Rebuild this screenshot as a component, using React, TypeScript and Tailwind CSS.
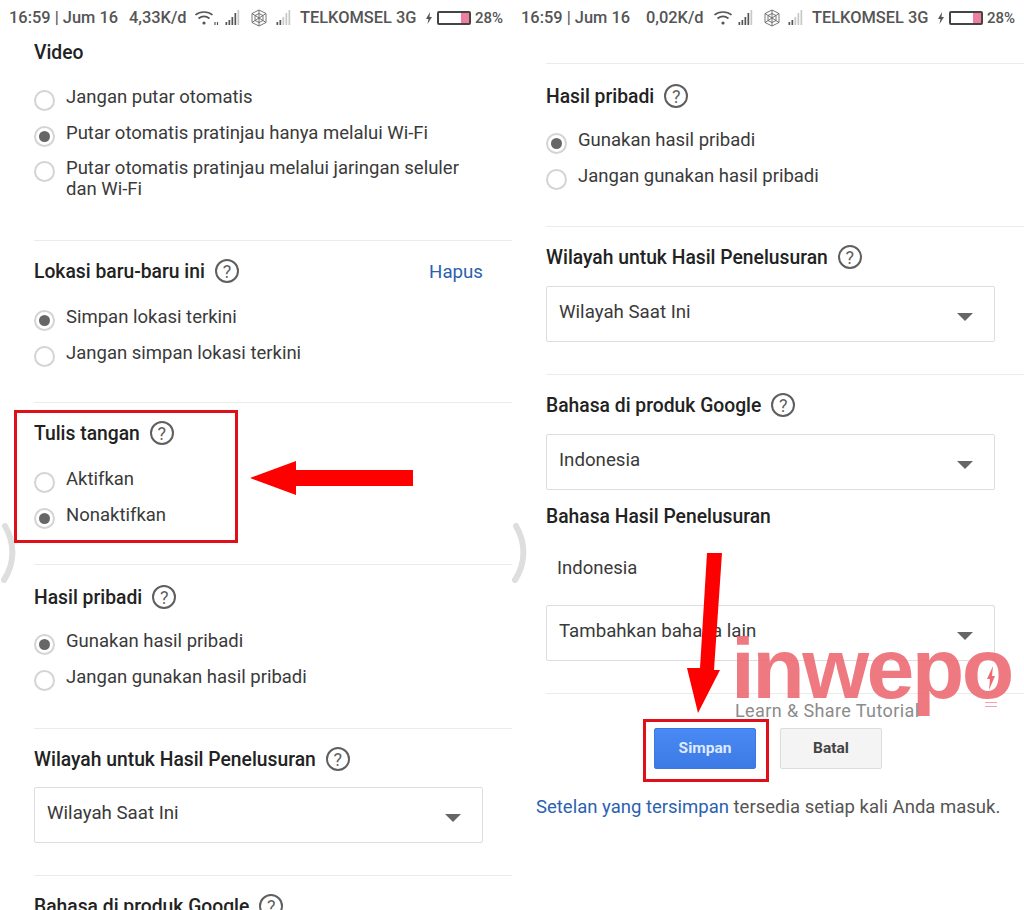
import React from "react";

const font = { fontFamily: "Roboto, 'Liberation Sans', sans-serif" };

function Bars({ dim = 1 }: { dim?: number }) {
  const hs = [3, 5, 8, 12, 15];
  return (
    <svg width="16" height="16" viewBox="0 0 16 16" className="shrink-0">
      {hs.map((h, i) => (
        <rect key={i} x={i * 3 + 0.5} y={15 - h} width="1.7" height={h} fill={i < 5 - dim ? "#555" : "#c8c8c8"} />
      ))}
    </svg>
  );
}

function Wifi({ extra }: { extra?: boolean }) {
  return (
    <svg width={extra ? 24 : 18} height="16" viewBox={extra ? "0 0 24 16" : "0 0 18 16"} className="shrink-0" fill="none" stroke="#555" strokeWidth="1.6">
      <path d="M0.5 5C5 1 13 1 17.5 5" />
      <path d="M3.5 8.5C7 5.8 11 5.8 14.5 8.5" />
      <circle cx="9" cy="13" r="1.6" fill="#555" stroke="none" />
      {extra && <path d="M20 12v3M22.5 12v3" strokeWidth="1.2" />}
    </svg>
  );
}

function Web() {
  return (
    <svg width="18" height="18" viewBox="0 0 18 18" className="shrink-0" fill="none" stroke="#666" strokeWidth="0.9">
      <path d="M9 1v16M2 4.5l14 9M16 4.5l-14 9" />
      <path d="M9 1L16 4.5V13.5L9 17L2 13.5V4.5Z" />
      <path d="M9 4.5L13 6.5V11.5L9 13.5L5 11.5V6.5Z" />
    </svg>
  );
}

function StatusBar({ speed, extra }: { speed: string; extra?: boolean }) {
  return (
    <div className="flex items-center h-9 pl-[9px] text-[16.4px] font-medium text-[#555] whitespace-nowrap">
      <span className="w-[109px]">16:59 | Jum 16</span>
      <span className={extra ? "ml-[11px] w-[58px]" : "ml-[16px] w-[58px]"}>{speed}</span>
      <span className={extra ? "ml-2" : "ml-[10px]"}><Wifi extra={extra} /></span>
      <span className="ml-[6px]"><Bars dim={1} /></span>
      <span className="ml-[9px]"><Web /></span>
      <span className={extra ? "ml-[8px]" : "ml-[7px]"}><Bars dim={3} /></span>
      <span className="ml-[8px] w-[115px]">TELKOMSEL 3G</span>
      <svg width="8" height="12" viewBox="0 0 8 12" className="ml-[10px] shrink-0">
        <path d="M5 0L1 7h2.5L2.5 12 7 5H4.5z" fill="#555" />
      </svg>
      <span className="ml-[4px] w-[34px] h-[14px] border-2 border-[#444] rounded-[2px] flex justify-end">
        <span className="w-[8px] h-full bg-[#ee7fa0]" />
      </span>
      <span className="ml-[4px] text-[15px]">28%</span>
    </div>
  );
}

function Help() {
  return (
    <span className="ml-[10px] -mt-[2px] w-6 h-6 rounded-full border-2 border-[#5f5f5f] text-[#5f5f5f] text-[18px] font-normal flex items-center justify-center shrink-0">
      ?
    </span>
  );
}

function Heading({ children }: { children: React.ReactNode }) {
  return (
    <div className="flex items-center h-7 pt-1 text-[19.3px] font-medium text-[#222] whitespace-nowrap">
      {children}
    </div>
  );
}

function Radio({ label, on, two }: { label: React.ReactNode; on?: boolean; two?: boolean }) {
  return (
    <div className={`flex ${two ? "" : "h-[35.5px]"}`}>
      <span className="mt-[10px] w-[21px] h-[21px] rounded-full border-2 border-[#d4d4d4] flex items-center justify-center shrink-0">
        {on && <span className="w-[11px] h-[11px] rounded-full bg-[#666]" />}
      </span>
      <span className="ml-[11px] text-[18.5px] leading-[21px] mt-[7px] text-[#3a3a3a]">{label}</span>
    </div>
  );
}

function Select({ label }: { label: string }) {
  return (
    <div className="h-[56px] border border-[#ddd] rounded-[2px] flex items-center pl-3 pr-[21px] text-[18.7px] text-[#3a3a3a]">
      <span className="flex-1 -mt-[4px]">{label}</span>
      <span className="w-0 h-0 border-x-[8px] border-x-transparent border-t-[8px] border-t-[#666] mt-[5px]" />
    </div>
  );
}

function Left() {
  return (
    <div className="w-[512px] h-[910px] overflow-hidden shrink-0">
      <StatusBar speed="4,33K/d" extra />
      <div className="ml-[34px]">
        <div className="pt-[1px] pb-[40px] border-b border-[#ebebeb]">
          <Heading>Video</Heading>
          <div className="mt-[15px] w-[440px]">
            <Radio label="Jangan putar otomatis" />
            <Radio on label="Putar otomatis pratinjau hanya melalui Wi-Fi" />
            <Radio two label={<>Putar otomatis pratinjau melalui jaringan seluler<br />dan Wi-Fi</>} />
          </div>
        </div>
        <div className="pt-[15px] pb-[31px] border-b border-[#ebebeb]">
          <div className="flex items-center">
            <Heading>Lokasi baru-baru ini<Help /></Heading>
            <span className="ml-auto mr-[29px] h-7 pt-1 leading-[24px] text-[18.7px] text-[#2a62b0]">Hapus</span>
          </div>
          <div className="mt-[16px]">
            <Radio on label="Simpan lokasi terkini" />
            <Radio label="Jangan simpan lokasi terkini" />
          </div>
        </div>
        <div className="pt-[15px] pb-[31px] border-b border-[#ebebeb]">
          <Heading>Tulis tangan<Help /></Heading>
          <div className="mt-[16px]">
            <Radio label="Aktifkan" />
            <Radio on label="Nonaktifkan" />
          </div>
        </div>
        <div className="pt-[17px] pb-[33px] border-b border-[#ebebeb]">
          <Heading>Hasil pribadi<Help /></Heading>
          <div className="mt-[14px]">
            <Radio on label="Gunakan hasil pribadi" />
            <Radio label="Jangan gunakan hasil pribadi" />
          </div>
        </div>
        <div className="pt-[15px] pb-[32px] border-b border-[#ebebeb]">
          <Heading>Wilayah untuk Hasil Penelusuran<Help /></Heading>
          <div className="mt-[15px] w-[449px]">
            <Select label="Wilayah Saat Ini" />
          </div>
        </div>
        <div className="pt-[15px]">
          <Heading>Bahasa di produk Google<Help /></Heading>
        </div>
      </div>
    </div>
  );
}

function Right() {
  return (
    <div className="w-[512px] h-[910px] overflow-hidden shrink-0">
      <StatusBar speed="0,02K/d" />
      <div className="ml-[34px]">
        <div className="mt-[27px] border-b border-[#ebebeb]" />
        <div className="pt-[17px] pb-[32px] border-b border-[#ebebeb]">
          <Heading>Hasil pribadi<Help /></Heading>
          <div className="mt-[14px]">
            <Radio on label="Gunakan hasil pribadi" />
            <Radio label="Jangan gunakan hasil pribadi" />
          </div>
        </div>
        <div className="pt-[15px] pb-[32px] border-b border-[#ebebeb]">
          <Heading>Wilayah untuk Hasil Penelusuran<Help /></Heading>
          <div className="mt-[16px] w-[449px]">
            <Select label="Wilayah Saat Ini" />
          </div>
        </div>
        <div className="pt-[15px]">
          <Heading>Bahasa di produk Google<Help /></Heading>
          <div className="mt-[16px] w-[449px]">
            <Select label="Indonesia" />
          </div>
        </div>
        <div className="pt-[11px] pb-[32px] border-b border-[#ebebeb]">
          <Heading>Bahasa Hasil Penelusuran</Heading>
          <div className="mt-[27px] ml-[11px] h-[26px] flex items-center text-[18.5px] text-[#3a3a3a]">Indonesia</div>
          <div className="mt-[23px] w-[449px]">
            <Select label="Tambahkan bahasa lain" />
          </div>
        </div>
        <div className="mt-[34px] ml-[108px] flex gap-[24px] text-[15.5px] font-bold">
          <button className="w-[102px] h-[41px] rounded-[2px] bg-gradient-to-b from-[#4a8af4] to-[#3c7ae6] border border-[#3b78e0] text-[#dfeaff]">Simpan</button>
          <button className="w-[102px] h-[41px] rounded-[2px] bg-[#f4f4f4] border border-[#dcdcdc] text-[#444]">Batal</button>
        </div>
        <div className="mt-[25px] -ml-[10px] text-[18.5px] text-[#555] whitespace-nowrap">
          <span className="text-[#2a62b0]">Setelan yang tersimpan</span> tersedia setiap kali Anda masuk.
        </div>
      </div>
    </div>
  );
}

export default function App() {
  return (
    <div className="relative w-[1024px] h-[910px] overflow-hidden bg-white flex" style={font}>
      <Left />
      <Right />

      {/* edge arcs */}
      <svg width="18" height="60" viewBox="0 0 18 60" className="absolute left-0 top-[523px]" fill="none">
        <path d="M5 3C15 20 15 40 4 57" stroke="#dedede" strokeWidth="6" strokeLinecap="round" />
      </svg>
      <svg width="18" height="60" viewBox="0 0 18 60" className="absolute left-[511px] top-[523px]" fill="none">
        <path d="M5 3C15 20 15 40 4 57" stroke="#dedede" strokeWidth="6" strokeLinecap="round" />
      </svg>

      {/* highlight boxes */}
      <div className="absolute left-[14px] top-[410px] w-[224px] h-[133px] border-[3px] border-[#e0101a]" />
      <div className="absolute left-[643px] top-[719px] w-[126px] h-[63px] border-[3px] border-[#e0101a]" />

      {/* arrows */}
      <svg width="166" height="36" viewBox="0 0 166 36" className="absolute left-[250px] top-[460px]">
        <path d="M0 18L46 1V10H163V26H46V35Z" fill="#ff0000" />
      </svg>
      <svg width="40" height="166" viewBox="0 0 40 166" className="absolute left-[686px] top-[551px]">
        <path d="M21 2H36L28 119H34L12 162L1 117H14Z" fill="#ff0000" />
      </svg>

      {/* watermark */}
      <div className="absolute left-[731px] top-[620px] text-[86px] leading-[96px] font-bold text-[#ee6b74] opacity-90 tracking-[-2.6px] whitespace-nowrap" style={{ fontFamily: "'Liberation Sans', sans-serif" }}>
        inwepo
      </div>
      <svg width="12" height="24" viewBox="0 0 12 24" className="absolute left-[985px] top-[666px]">
        <path d="M8 0L2 13h3L4 24 10 10H7z" fill="#ee6b74" />
      </svg>
      <div className="absolute left-[985px] top-[702px] w-[12px] h-[5px] border-y border-[#f3a0a6]" />
      <div className="absolute left-[735px] top-[699px] text-[18px] leading-[24px] text-[#8b8b8b] tracking-[0.4px] whitespace-nowrap">
        Learn &amp; Share Tutorial
      </div>
    </div>
  );
}
